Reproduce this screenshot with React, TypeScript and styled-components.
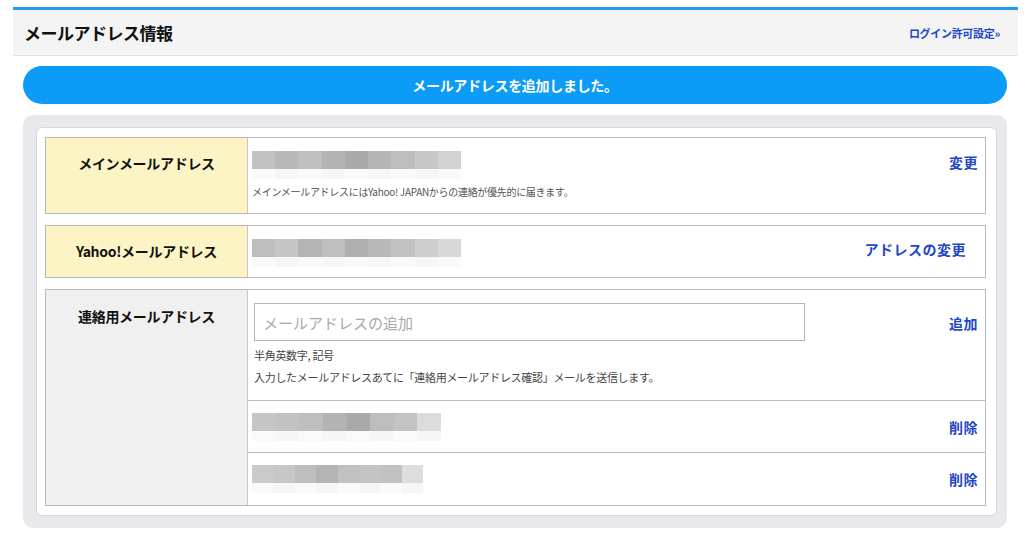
import { FC } from "react";
import styled, { createGlobalStyle } from "styled-components";

const GlobalStyle = createGlobalStyle`
  html, body {
    margin: 0;
    padding: 0;
    background: #fff;
    font-family: "Noto Sans CJK JP", "Noto Sans", sans-serif;
    color: #222;
  }
  * { box-sizing: border-box; }
`;

const Page = styled.div`
  padding: 7px 6px 0 13px;
`;

const Header = styled.header`
  height: 49px;
  display: flex;
  align-items: center;
  justify-content: space-between;
  padding: 0 18px 0 11px;
  background: #f4f4f4;
  border-top: 3px solid #1f9cf0;
  border-bottom: 1px solid #e3e3e3;
`;

const Title = styled.h1`
  margin: 0;
  font-size: 17px;
  font-weight: 700;
  color: #111;
  letter-spacing: -0.5px;
`;

const HeaderLink = styled.a`
  font-size: 11px;
  font-weight: 700;
  color: #2346c4;
  text-decoration: none;
  letter-spacing: -0.3px;
`;

const Content = styled.div`
  padding: 10px 11px 0 10px;
`;

const Banner = styled.div`
  height: 38px;
  border-radius: 19px;
  background: #0c9bf7;
  color: #fff;
  font-size: 14px;
  font-weight: 700;
  display: flex;
  align-items: center;
  justify-content: center;
  letter-spacing: -0.3px;
`;

const Panel = styled.section`
  margin-top: 11px;
  background: #e7e9ed;
  border-radius: 10px;
  padding: 12px 10px 12px 13px;
`;

const Inner = styled.div`
  background: #fff;
  border: 1px solid #d8d8d8;
  border-radius: 6px;
  padding: 9px 10px 9px 8px;
  display: flex;
  flex-direction: column;
  gap: 11px;
`;

const Row = styled.div`
  display: grid;
  grid-template-columns: 202px 1fr;
  border: 1px solid #b9b9b9;
`;

const Label = styled.div<{ $tone: "yellow" | "grey" }>`
  background: ${(p) => (p.$tone === "yellow" ? "#fdf4c6" : "#f0f0f0")};
  border-right: 1px solid #c6c6c6;
  padding-top: 16px;
  text-align: center;
  font-size: 14px;
  font-weight: 700;
  line-height: 18px;
  color: #111;
  letter-spacing: -0.3px;
`;

const ValueCell = styled.div`
  display: flex;
  flex-direction: column;
`;

const SubRow = styled.div<{ $top?: boolean; $h: number }>`
  display: flex;
  align-items: ${(p) => (p.$top ? "flex-start" : "center")};
  justify-content: space-between;
  min-height: ${(p) => p.$h}px;
  padding: ${(p) => (p.$top ? "13px 0 8px 4px" : "0 0 0 4px")};
  & + & {
    border-top: 1px solid #bdbdbd;
  }
`;

const Body = styled.div`
  display: flex;
  flex-direction: column;
`;

const ActionLink = styled.a<{ $pad: number; $offset?: number }>`
  font-size: 14px;
  font-weight: 700;
  line-height: 20px;
  color: #2346c4;
  text-decoration: none;
  padding-right: ${(p) => p.$pad}px;
  margin-top: ${(p) => p.$offset ?? 0}px;
  letter-spacing: 0.5px;
  white-space: nowrap;
`;

const Blur = styled.div<{ $w: number }>`
  width: ${(p) => p.$w}px;
  display: flex;
  flex-direction: column;
`;

const BlurStrip = styled.div<{ $h: number }>`
  display: flex;
  height: ${(p) => p.$h}px;
`;

const BlurCell = styled.span<{ $shade: string }>`
  flex: 1;
  background: ${(p) => p.$shade};
`;

const Note = styled.p`
  margin: 5px 0 0;
  font-size: 10px;
  line-height: 15px;
  color: #555;
  letter-spacing: -0.3px;
`;

const EmailInput = styled.input`
  width: 551px;
  height: 38px;
  margin-left: 2px;
  border: 1px solid #a9b9cb;
  padding: 0 8px;
  font-family: inherit;
  font-size: 15px;
  color: #333;
  outline: none;
  &::placeholder {
    color: #aaa;
  }
`;

const Hints = styled.div`
  margin: 3px 0 0 2px;
  font-size: 11px;
  line-height: 22px;
  color: #444;
  letter-spacing: -0.3px;
`;

const Mosaic: FC<{ width: number; shades: string[] }> = ({ width, shades }) => (
  <Blur $w={width}>
    <BlurStrip $h={18}>
      {shades.map((s, i) => (
        <BlurCell key={i} $shade={s} />
      ))}
    </BlurStrip>
    <BlurStrip $h={10}>
      {shades.map((_, i) => (
        <BlurCell key={i} $shade={i % 2 ? "#f6f6f6" : "#fafafa"} />
      ))}
    </BlurStrip>
  </Blur>
);

const shadesA = ["#c2c2c2", "#b9b9b9", "#bfbfbf", "#b3b3b3", "#aaaaaa", "#b5b5b5", "#bdbdbd", "#c8c8c8", "#d2d2d2"];
const shadesB = ["#bdbdbd", "#c6c6c6", "#b4b4b4", "#bfbfbf", "#afafaf", "#b8b8b8", "#c2c2c2", "#cdcdcd", "#d9d9d9"];
const shadesC = ["#c6c6c6", "#c2c2c2", "#bebebe", "#b3b3b3", "#a9a9a9", "#bdbdbd", "#c3c3c3", "#dcdcdc"];
const shadesD = ["#cbcbcb", "#c7c7c7", "#bebebe", "#b4b4b4", "#c1c1c1", "#c4c4c4", "#c2c2c2", "#dddddd"];

const App: FC = () => (
  <>
    <GlobalStyle />
    <Page>
      <Header>
        <Title>メールアドレス情報</Title>
        <HeaderLink href="#">ログイン許可設定»</HeaderLink>
      </Header>

      <Content>
        <Banner>メールアドレスを追加しました。</Banner>

        <Panel>
          <Inner>
            <Row>
              <Label $tone="yellow">メインメールアドレス</Label>
              <ValueCell>
                <SubRow $top $h={75}>
                  <Body>
                    <Mosaic width={209} shades={shadesA} />
                    <Note>メインメールアドレスにはYahoo! JAPANからの連絡が優先的に届きます。</Note>
                  </Body>
                  <ActionLink href="#" $pad={7} $offset={1}>
                    変更
                  </ActionLink>
                </SubRow>
              </ValueCell>
            </Row>

            <Row>
              <Label $tone="yellow">Yahoo!メールアドレス</Label>
              <ValueCell>
                <SubRow $top $h={51}>
                  <Mosaic width={209} shades={shadesB} />
                  <ActionLink href="#" $pad={19}>
                    アドレスの変更
                  </ActionLink>
                </SubRow>
              </ValueCell>
            </Row>

            <Row>
              <Label $tone="grey" style={{ paddingTop: 17 }}>
                連絡用メールアドレス
              </Label>
              <ValueCell>
                <SubRow $top $h={110}>
                  <Body>
                    <EmailInput placeholder="メールアドレスの追加" />
                    <Hints>
                      半角英数字, 記号
                      <br />
                      入力したメールアドレスあてに「連絡用メールアドレス確認」メールを送信します。
                    </Hints>
                  </Body>
                  <ActionLink href="#" $pad={7} $offset={10}>
                    追加
                  </ActionLink>
                </SubRow>
                <SubRow $h={52}>
                  <Mosaic width={189} shades={shadesC} />
                  <ActionLink href="#" $pad={7}>
                    削除
                  </ActionLink>
                </SubRow>
                <SubRow $h={53}>
                  <Mosaic width={171} shades={shadesD} />
                  <ActionLink href="#" $pad={7}>
                    削除
                  </ActionLink>
                </SubRow>
              </ValueCell>
            </Row>
          </Inner>
        </Panel>
      </Content>
    </Page>
  </>
);

export default App;
